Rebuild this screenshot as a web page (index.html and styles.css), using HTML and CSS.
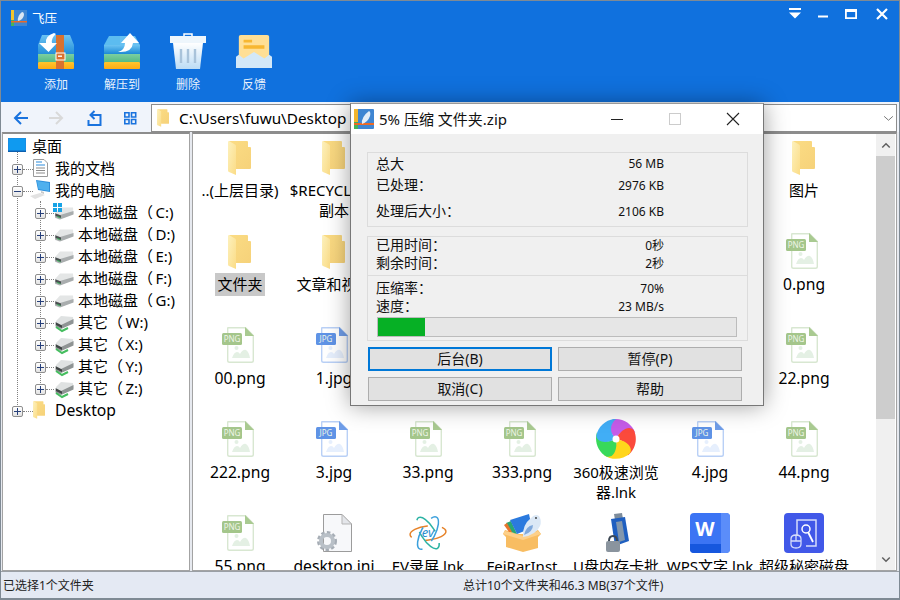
FILE: index.html
```html
<!DOCTYPE html>
<html lang="zh-CN">
<head>
<meta charset="utf-8">
<title>飞压</title>
<link rel="stylesheet" href="styles.css">
</head>
<body>
<svg class="defs" width="0" height="0" aria-hidden="true">
  <defs>
    <linearGradient id="gBlue" x1="0" y1="0" x2="0" y2="1"><stop offset="0" stop-color="#6cc3f2"/><stop offset="1" stop-color="#1c8ad6"/></linearGradient>
    <linearGradient id="gGreen" x1="0" y1="0" x2="0" y2="1"><stop offset="0" stop-color="#7ccfa0"/><stop offset="1" stop-color="#55bb85"/></linearGradient>
    <linearGradient id="gYellow" x1="0" y1="0" x2="0" y2="1"><stop offset="0" stop-color="#ffc52e"/><stop offset="1" stop-color="#fdab14"/></linearGradient>
    <linearGradient id="gBin" x1="0" y1="0" x2="0" y2="1"><stop offset="0" stop-color="#ffffff"/><stop offset="1" stop-color="#bcdcf5"/></linearGradient>
    <linearGradient id="gFlap" x1="0" y1="0" x2="1" y2="1"><stop offset="0" stop-color="#fdf1bd"/><stop offset="1" stop-color="#fbdc86"/></linearGradient>
    <linearGradient id="gBack" x1="0" y1="0" x2="1" y2="1"><stop offset="0" stop-color="#fbdc84"/><stop offset="1" stop-color="#f6d27a"/></linearGradient>
    <symbol id="folder" viewBox="0 0 23 34">
      <path d="M1 0H19Q20 0 20 1V6H22Q23 6 23 7V27Q23 28 22 28H8Z" fill="url(#gBack)"/>
      <path d="M0 1Q0 0 1 0L7 3.500Q8 4 8 5V34L1 31Q0 30.500 0 29.500Z" fill="url(#gFlap)"/>
    </symbol>
    <symbol id="png" viewBox="0 0 32 36">
      <path d="M6 .7H23.500L31.300 8.500V33.500Q31.300 35.300 29.500 35.300H7.500Q5.700 35.300 5.700 33.500V1Z" fill="#fff" stroke="#d8e7d1" stroke-width="1.400"/>
      <path d="M23 0L32 9H23Z" fill="#a9ca91"/>
      <path d="M10 31Q12 25 15 25Q17 25 18 27Q21 22 24 23Q27 25 28 31Z" fill="#e4f0e4"/>
      <circle cx="14.500" cy="21" r="2" fill="#e4f0e4"/>
      <rect x="0" y="6" width="20" height="12" rx="1.500" fill="#a4c68b"/>
      <text class="tag" x="10" y="15.200">PNG</text>
    </symbol>
    <symbol id="jpg" viewBox="0 0 32 36">
      <path d="M6 .7H23.500L31.300 8.500V33.500Q31.300 35.300 29.500 35.300H7.500Q5.700 35.300 5.700 33.500V1Z" fill="#fff" stroke="#b9d0f6" stroke-width="1.400"/>
      <path d="M23 0L32 9H23Z" fill="#6f9de8"/>
      <path d="M10 31Q12 25 15 25Q17 25 18 27Q21 22 24 23Q27 25 28 31Z" fill="#e6effd"/>
      <circle cx="14.500" cy="21" r="2" fill="#e6effd"/>
      <rect x="0" y="6" width="20" height="12" rx="1.500" fill="#5f93e6"/>
      <text class="tag" x="10" y="15.200">JPG</text>
    </symbol>
    <symbol id="drive" viewBox="0 0 20 14">
      <path d="M1 7L6 1.500H19L19.500 8L5 13.500L1 12Z" fill="#e4e6e6"/>
      <path d="M1 7L6 9L19.500 5V8.500L6 13.500L1 11.500Z" fill="#a9adae"/>
      <path d="M1.500 7.500L7 9.500V12L1.500 10Z" fill="#4a4f50"/>
      <path d="M3 10.500L6.500 11.700" stroke="#38b05a" stroke-width="1"/>
    </symbol>
    <symbol id="xdrive" viewBox="0 0 20 18">
      <path d="M2 6L7 1L19 2L19.500 7L7 13L1.500 10Z" fill="#dfe2e2"/>
      <path d="M1.500 7L7 10L19.500 4V8.500L7 14L1.500 11.500Z" fill="#8f9494"/>
      <path d="M2 7.500L8 10.500V13L2 10Z" fill="#3f4444"/>
      <path d="M2 12L8 16L14 13" stroke="#45bd5f" stroke-width="2" fill="none"/>
    </symbol>
    <symbol id="chev" viewBox="0 0 12 8">
      <path d="M1.500 6.500L6 2L10.500 6.500" fill="none" stroke="#606060" stroke-width="1.800"/>
    </symbol>
    <path id="blade" d="M20 20C12 12 11 3 17 .3C27 -1 36 5 39.300 14C31 9 24 12 20 20Z"/>
  </defs>
</svg>

<div class="app">
  <header class="head">
    <div class="titlebar">
      <svg class="app-logo" viewBox="0 0 16 16">
        <rect width="16" height="16" fill="#3f86d2"/>
        <rect width="3" height="16" fill="#f3c52c"/>
        <rect width="3" height="6" y="10" fill="#46b35a"/>
        <path d="M0 11H16V12.500H0Z" fill="#ea6a28"/>
        <path d="M7 11Q6 6 11 2Q13 2 13 5Q12 10 7 11Z" fill="#dbe7f3"/>
      </svg>
      <span class="app-name">飞压</span>
      <div class="winbtns">
        <svg class="wb" viewBox="0 0 14 14"><path d="M1 1H13V3H1ZM1 5.500H13L7 11.500Z" fill="#fff"/></svg>
        <svg class="wb" viewBox="0 0 14 14"><path d="M2 8.500H12V10.500H2Z" fill="#fff"/></svg>
        <svg class="wb" viewBox="0 0 14 14"><path d="M1 2H13V12H1ZM2.800 5V10.200H11.200V5Z" fill="#fff" fill-rule="evenodd"/></svg>
        <svg class="wb wb-x" viewBox="0 0 14 14"><path d="M2 2L12 12M12 2L2 12" stroke="#fff" stroke-width="2.200"/></svg>
      </div>
    </div>
    <div class="toolbar">
      <div class="tool">
        <svg class="tool-ico" viewBox="0 0 36 36">
          <path d="M4 2H32L36 12V23H0V12Z" fill="url(#gBlue)"/>
          <rect y="21" width="36" height="8" fill="url(#gGreen)"/>
          <rect y="29" width="36" height="7" rx="1" fill="url(#gYellow)"/>
          <rect x="18" y="2" width="8" height="34" fill="#d9722f"/>
          <rect x="18" y="20" width="9" height="7" fill="#d9722f" stroke="#fff" stroke-width="1"/>
          <rect x="20" y="22.500" width="4" height="1.400" fill="#fff"/>
          <path d="M16 0Q7 3 8 10H1L10.500 19L19 10H14Q13 5 18 1Z" fill="#fff"/>
        </svg>
        <span class="tool-label">添加</span>
      </div>
      <div class="tool">
        <svg class="tool-ico" viewBox="0 0 36 36">
          <path d="M5 3H20L17 20L0 12Z" fill="#5cbcf0"/>
          <path d="M16 3H31L36 12H16Z" fill="#67c0f1"/>
          <path d="M0 12H36V21H0Z" fill="url(#gBlue)"/>
          <rect y="21" width="36" height="8" fill="url(#gGreen)"/>
          <rect y="29" width="36" height="7" rx="1" fill="url(#gYellow)"/>
          <path d="M14 19Q21 17 21 10H17L26 0L35 10H29Q28 20 14 19Z" fill="#fff"/>
        </svg>
        <span class="tool-label">解压到</span>
      </div>
      <div class="tool">
        <svg class="tool-ico" viewBox="0 0 36 36">
          <path d="M14 3V1H22V3" fill="none" stroke="#fff" stroke-width="1.500"/>
          <rect y="3" width="36" height="7" fill="#eef6fc"/>
          <path d="M3 10H33L30 36H6Z" fill="url(#gBin)"/>
          <path d="M11 16V30M18 16V30M25 16V30" stroke="#a9c3da" stroke-width="2.400"/>
        </svg>
        <span class="tool-label">删除</span>
      </div>
      <div class="tool">
        <svg class="tool-ico" viewBox="0 0 38 36">
          <rect x="3" y="1" width="32" height="30" rx="2" fill="#ffdf95"/>
          <path d="M8 6H17V9H8ZM8 12H30V15.500H8Z" fill="#f7b731"/>
          <path d="M0 36V24L3 22L8 26L19 19L30 26L35 22L38 24V36Z" fill="#d3e8f8"/>
        </svg>
        <span class="tool-label">反馈</span>
      </div>
    </div>
  </header>

  <nav class="navbar">
    <div class="nav-btns">
      <svg class="nav-ico" viewBox="0 0 16 16"><path d="M15 8H2M8 2L2 8L8 14" fill="none" stroke="#1a73de" stroke-width="2"/></svg>
      <svg class="nav-ico" viewBox="0 0 16 16"><path d="M1 8H14M8 2L14 8L8 14" fill="none" stroke="#d9d9d9" stroke-width="2"/></svg>
      <svg class="nav-ico nav-up" viewBox="0 0 16 16"><path d="M7.500 1L3.500 5L7.500 9M3.500 5H13.500V15H1.500V10" fill="none" stroke="#1a73de" stroke-width="2"/></svg>
      <svg class="nav-ico" viewBox="0 0 16 16"><path d="M2.800 2.800H7V7H2.800ZM9.500 2.800H13.700V7H9.500ZM2.800 9.500H7V13.700H2.800ZM9.500 9.500H13.700V13.700H9.500Z" fill="none" stroke="#1a73de" stroke-width="1.600"/></svg>
    </div>
    <div class="addr">
      <svg class="addr-ico"><use href="#folder"/></svg>
      <span class="addr-text">C:\Users\fuwu\Desktop</span>
      <svg class="addr-chev" viewBox="0 0 12 8"><path d="M1 1.500L6 6L11 1.500" fill="none" stroke="#666" stroke-width="1"/></svg>
    </div>
  </nav>

  <main class="main">
    <aside class="tree">
      <i class="guide guide-a"></i>
      <i class="guide guide-b"></i>
      <div class="trow lv0">
        <svg class="ico-desk" viewBox="0 0 18 14"><rect width="18" height="14" fill="#1e8be0"/><rect y="12.500" width="18" height="1.500" fill="#0c5fae"/><rect x=".7" y=".7" width="16.600" height="11.600" fill="#0f9af0"/></svg>
        <span class="tx0">桌面</span>
      </div>
      <div class="trow lv1">
        <b class="exp plus"></b><i class="dots"></i>
        <span class="slot1"><svg class="ico-doc" viewBox="0 0 15 18"><path d="M.5.500H11L14.500 4V17.500H.5Z" fill="#fff" stroke="#9a9a9a"/><path d="M3 3H9M3 6H12" stroke="#2d8bdc" stroke-width="1.200"/><path d="M3 9H12M3 11.500H12M3 14H12" stroke="#8a8a8a"/></svg></span>
        <span class="tx">我的文档</span>
      </div>
      <div class="trow lv1">
        <b class="exp minus"></b><i class="dots"></i>
        <span class="slot1"><svg class="ico-pc" viewBox="0 0 20 20"><path d="M6 0L20 2V12L8 10Z" fill="#2e8fdb"/><path d="M7 1L19 3V11L8.500 9Z" fill="#4fb0ee"/><path d="M11 11L14 12V14L11 13Z" fill="#c9c9c9"/><path d="M0 16L10 13L15 15L5 19Z" fill="#e2e2e2"/></svg></span>
        <span class="tx">我的电脑</span>
      </div>
      <div class="trow lv2">
        <b class="exp plus"></b><i class="dots short"></i>
        <span class="slot2">
          <svg class="ico-drive"><use href="#drive"/></svg>
          <svg class="ico-win" viewBox="0 0 9 9"><path d="M0 0H4V4H0ZM5 0H9V4H5ZM0 5H4V9H0ZM5 5H9V9H5Z" fill="#17a3e6"/></svg>
        </span>
        <span class="tx">本地磁盘（&#8201;C:)</span>
      </div>
      <div class="trow lv2"><b class="exp plus"></b><i class="dots short"></i><span class="slot2"><svg class="ico-drive"><use href="#drive"/></svg></span><span class="tx">本地磁盘（&#8201;D:)</span></div>
      <div class="trow lv2"><b class="exp plus"></b><i class="dots short"></i><span class="slot2"><svg class="ico-drive"><use href="#drive"/></svg></span><span class="tx">本地磁盘（&#8201;E:)</span></div>
      <div class="trow lv2"><b class="exp plus"></b><i class="dots short"></i><span class="slot2"><svg class="ico-drive"><use href="#drive"/></svg></span><span class="tx">本地磁盘（&#8201;F:)</span></div>
      <div class="trow lv2"><b class="exp plus"></b><i class="dots short"></i><span class="slot2"><svg class="ico-drive"><use href="#drive"/></svg></span><span class="tx">本地磁盘（&#8201;G:)</span></div>
      <div class="trow lv2"><b class="exp plus"></b><i class="dots short"></i><span class="slot2"><svg class="ico-xdrive"><use href="#xdrive"/></svg></span><span class="tx">其它（&#8201;W:)</span></div>
      <div class="trow lv2"><b class="exp plus"></b><i class="dots short"></i><span class="slot2"><svg class="ico-xdrive"><use href="#xdrive"/></svg></span><span class="tx">其它（&#8201;X:)</span></div>
      <div class="trow lv2"><b class="exp plus"></b><i class="dots short"></i><span class="slot2"><svg class="ico-xdrive"><use href="#xdrive"/></svg></span><span class="tx">其它（&#8201;Y:)</span></div>
      <div class="trow lv2"><b class="exp plus"></b><i class="dots short"></i><span class="slot2"><svg class="ico-xdrive"><use href="#xdrive"/></svg></span><span class="tx">其它（&#8201;Z:)</span></div>
      <div class="trow lv1">
        <b class="exp plus"></b><i class="dots"></i>
        <span class="slot1"><svg class="ico-tfolder"><use href="#folder"/></svg></span>
        <span class="en">Desktop</span>
      </div>
    </aside>

    <section class="files">
      <div class="grid">
        <div class="cell"><div class="ic"><svg class="i-folder"><use href="#folder"/></svg></div><div class="lb">..(上层目录)</div></div>
        <div class="cell"><div class="ic"><svg class="i-folder"><use href="#folder"/></svg></div><div class="lb">$RECYCLE.BI<br>副本</div></div>
        <div class="cell"></div><div class="cell"></div><div class="cell"></div><div class="cell"></div>
        <div class="cell"><div class="ic"><svg class="i-folder"><use href="#folder"/></svg></div><div class="lb">图片</div></div>

        <div class="cell"><div class="ic"><svg class="i-folder"><use href="#folder"/></svg></div><div class="lb"><span class="sel">文件夹</span></div></div>
        <div class="cell"><div class="ic"><svg class="i-folder"><use href="#folder"/></svg></div><div class="lb">文章和视频</div></div>
        <div class="cell"></div><div class="cell"></div><div class="cell"></div><div class="cell"></div>
        <div class="cell"><div class="ic"><svg class="i-file"><use href="#png"/></svg></div><div class="lb en">0.png</div></div>

        <div class="cell"><div class="ic"><svg class="i-file"><use href="#png"/></svg></div><div class="lb en">00.png</div></div>
        <div class="cell"><div class="ic"><svg class="i-file"><use href="#jpg"/></svg></div><div class="lb en">1.jpg</div></div>
        <div class="cell"></div><div class="cell"></div><div class="cell"></div><div class="cell"></div>
        <div class="cell"><div class="ic"><svg class="i-file"><use href="#png"/></svg></div><div class="lb en">22.png</div></div>

        <div class="cell"><div class="ic"><svg class="i-file"><use href="#png"/></svg></div><div class="lb en">222.png</div></div>
        <div class="cell"><div class="ic"><svg class="i-file"><use href="#jpg"/></svg></div><div class="lb en">3.jpg</div></div>
        <div class="cell"><div class="ic"><svg class="i-file"><use href="#png"/></svg></div><div class="lb en">33.png</div></div>
        <div class="cell"><div class="ic"><svg class="i-file"><use href="#png"/></svg></div><div class="lb en">333.png</div></div>
        <div class="cell"><div class="ic">
          <svg class="i-big" viewBox="0 0 40 40">
            <use href="#blade" fill="#c55ce9"/>
            <use href="#blade" fill="#fb4a3c" transform="rotate(72 20 20)"/>
            <use href="#blade" fill="#ffd61c" transform="rotate(144 20 20)"/>
            <use href="#blade" fill="#38d95a" transform="rotate(216 20 20)"/>
            <use href="#blade" fill="#41aef6" transform="rotate(288 20 20)"/>
            <circle cx="20" cy="20" r="3.500" fill="#fff"/>
          </svg>
        </div><div class="lb">360极速浏览器.lnk</div></div>
        <div class="cell"><div class="ic"><svg class="i-file"><use href="#jpg"/></svg></div><div class="lb en">4.jpg</div></div>
        <div class="cell"><div class="ic"><svg class="i-file"><use href="#png"/></svg></div><div class="lb en">44.png</div></div>

        <div class="cell"><div class="ic"><svg class="i-file"><use href="#png"/></svg></div><div class="lb en">55.png</div></div>
        <div class="cell"><div class="ic">
          <svg class="i-big" viewBox="0 0 40 40">
            <path d="M9.500 1.500H28L37.500 11V38.500H9.500Z" fill="#f7f8fa" stroke="#9c9c9c"/>
            <path d="M28 1.500V11H37.500Z" fill="#e4e6ea" stroke="#b5b5b5"/>
            <circle cx="13" cy="28" r="7.500" fill="none" stroke="#a6adb5" stroke-width="5" stroke-dasharray="3 2"/>
            <circle cx="13" cy="28" r="6" fill="none" stroke="#b9c0c7" stroke-width="4"/>
          </svg>
        </div><div class="lb en">desktop.ini</div></div>
        <div class="cell"><div class="ic">
          <svg class="i-big" viewBox="0 0 40 40" fill="none" stroke-width="1.500">
            <ellipse cx="20" cy="20" rx="18" ry="7" stroke="#e6832a" transform="rotate(-6 20 20)" stroke-dasharray="24 14"/>
            <ellipse cx="20" cy="20" rx="18" ry="7" stroke="#2cb3a4" transform="rotate(58 20 20)" stroke-dasharray="26 12"/>
            <ellipse cx="20" cy="20" rx="18" ry="7" stroke="#3ba0dc" transform="rotate(-62 20 20)" stroke-dasharray="26 12"/>
            <text class="ev-txt" x="20" y="24">ev</text>
          </svg>
        </div><div class="lb">EV录屏.lnk</div></div>
        <div class="cell"><div class="ic">
          <svg class="i-big" viewBox="0 0 40 40">
            <path d="M1 21L3 17L16 21H22L36 17L39 21L36 24V35L21 39L4 34V24Z" fill="#f8bd62"/>
            <path d="M1 21L21 27L39 21L36 18L21 23L3 18Z" fill="#fdd08a"/>
            <path d="M4 10L9 8L15 21L9 19Z" fill="#2aa772"/>
            <path d="M2 12L5 10L10 19L7 19Z" fill="#e8752c"/>
            <path d="M8 7L27 1L30 15L15 21Z" fill="#2b7ade"/>
            <path d="M21 24Q20 12 29 5Q33 0 37 3Q40 8 38 13Q34 22 21 24Z" fill="#dbe8f6"/>
            <path d="M22 22Q24 13 31 12Q31 19 22 22Z" fill="#7fa8dc"/>
            <circle cx="34" cy="5" r=".9" fill="#333"/>
          </svg>
        </div><div class="lb">FeiRarInst</div></div>
        <div class="cell"><div class="ic">
          <svg class="i-big" viewBox="0 0 40 40">
            <path d="M18 1L26 0L27 6L19 7Z" fill="#7d8c9c"/>
            <path d="M15 6L29 4L33 28L19 33Z" fill="#1f5fc0"/>
            <path d="M20 9L26 8L29 27L23 29Z" fill="#8297ad"/>
            <rect x="10" y="28" width="14" height="11" rx="2" fill="#8a949e"/>
            <path d="M13 28Q13 23 17 23Q21 23 21 28" fill="none" stroke="#3d4854" stroke-width="2"/>
          </svg>
        </div><div class="lb">U盘内存卡批量</div></div>
        <div class="cell"><div class="ic">
          <svg class="i-big" viewBox="0 0 40 40">
            <rect width="40" height="40" rx="4" fill="#3b74f4"/>
            <path d="M31 0H36Q40 0 40 4V36Q40 40 36 40H31Z" fill="#5b8dfa"/>
            <path d="M0 31H31V40H4Q0 40 0 36Z" fill="#1657de"/>
            <text class="w-txt" x="15" y="23">W</text>
          </svg>
        </div><div class="lb">WPS文字.lnk</div></div>
        <div class="cell"><div class="ic">
          <svg class="i-big" viewBox="0 0 40 40">
            <rect width="40" height="40" rx="4" fill="#4158e8"/>
            <path d="M13 22V7H32V33H22" fill="none" stroke="#d5dcfb" stroke-width="1.500"/>
            <circle cx="22" cy="16" r="4" fill="none" stroke="#fff" stroke-width="1.500"/>
            <path d="M24 19L29 29" stroke="#fff" stroke-width="1.800"/>
            <path d="M7 26Q7 22 12 22Q17 22 17 26V31Q17 35 12 35Q7 35 7 31ZM7 28H17M12 22V28" fill="none" stroke="#d5dcfb" stroke-width="1.300"/>
          </svg>
        </div><div class="lb">超级秘密磁盘</div></div>
      </div>
      <div class="scroll">
        <div class="sb-btn"><svg class="sb-chev"><use href="#chev"/></svg></div>
        <div class="sb-thumb"></div>
        <div class="sb-track"></div>
        <div class="sb-btn"><svg class="sb-chev flip"><use href="#chev"/></svg></div>
      </div>
    </section>
  </main>

  <footer class="status">
    <span class="st-left">已选择1个文件夹</span>
    <span class="st-mid">总计10个文件夹和46.3 MB(37个文件)</span>
  </footer>
</div>

<div class="dlg">
  <div class="dlg-title">
    <svg class="dlg-logo" viewBox="0 0 20 20">
      <rect width="20" height="20" rx="1" fill="#3f86d2"/>
      <rect width="4" height="13" fill="#f3b52c"/>
      <rect width="4" height="7" y="13" fill="#46b35a"/>
      <path d="M0 14H20V16H0Z" fill="#ea6a28"/>
      <path d="M8 15Q7 8 15 2Q17 3 16 7Q14 13 8 15Z" fill="#e4eef8"/>
    </svg>
    <span class="dlg-name">5% 压缩 文件夹.zip</span>
    <div class="dlg-ctrls">
      <svg class="dc" viewBox="0 0 14 14"><path d="M1 7.500H13" stroke="#222" stroke-width="1"/></svg>
      <svg class="dc" viewBox="0 0 14 14"><rect x="1.500" y="1.500" width="11" height="11" fill="none" stroke="#ccc"/></svg>
      <svg class="dc" viewBox="0 0 14 14"><path d="M1 1L13 13M13 1L1 13" stroke="#222" stroke-width="1.100"/></svg>
    </div>
  </div>
  <div class="dlg-body">
    <div class="group g1">
      <div class="kv kv1"><span class="k">总大</span><span class="v">56 MB</span></div>
      <div class="kv kv2"><span class="k">已处理：</span><span class="v">2976 KB</span></div>
      <div class="kv kv3"><span class="k">处理后大小：</span><span class="v">2106 KB</span></div>
    </div>
    <div class="group g2">
      <div class="sub sub-a">
        <div class="kv kv-t"><span class="k">已用时间：</span><span class="v">0秒</span></div>
        <div class="kv kv-t"><span class="k">剩余时间：</span><span class="v">2秒</span></div>
      </div>
      <div class="sub sub-b">
        <div class="kv kv-t"><span class="k">压缩率：</span><span class="v">70%</span></div>
        <div class="kv kv-t"><span class="k">速度：</span><span class="v">23 MB/s</span></div>
        <div class="bar"><div class="fill" style="width:13%"></div></div>
      </div>
    </div>
    <div class="btns">
      <div class="btn focus">后台(B)</div>
      <div class="btn">暂停(P)</div>
      <div class="btn">取消(C)</div>
      <div class="btn">帮助</div>
    </div>
  </div>
</div>
</body>
</html>
```

FILE: styles.css
```css
* { box-sizing: border-box; }
html, body { margin: 0; padding: 0; width: 900px; height: 600px; overflow: hidden; }
body { font-family: "Noto Sans", "Noto Sans CJK SC", sans-serif; font-size: 15px; color: #000; background: #fff; position: relative; }
.defs { position: absolute; }
.tag { font-family: "Noto Sans", sans-serif; font-size: 8px; fill: #eef5e8; text-anchor: middle; }
.w-txt { font-family: "Noto Sans", sans-serif; font-size: 20px; font-weight: 700; fill: #fff; text-anchor: middle; }
.ev-txt { font-family: "Noto Sans", sans-serif; font-size: 13px; font-style: italic; fill: #2a8fcf; stroke: none; text-anchor: middle; }
.en { font-size: 15.700px; }

.app { width: 900px; height: 600px; display: flex; flex-direction: column; border: 1px solid #7f8a94; border-bottom-width: 2px; background: #f0f4fb; }

.head { height: 101px; background: #1071de; color: #fff; display: flex; flex-direction: column; flex: none; }
.titlebar { height: 32px; display: flex; align-items: center; padding: 0 10px 4px 10px; }
.app-logo { width: 16px; height: 16px; margin-top: 5px; }
.app-name { font-size: 12.500px; margin: 5px 0 0 5px; }
.winbtns { margin-left: auto; display: flex; gap: 14px; align-self: flex-start; margin-top: 6px; }
.wb { width: 14px; height: 14px; display: block; }
.wb-x { margin-left: 3px; }
.toolbar { display: flex; padding-left: 22px; }
.tool { width: 66px; display: flex; flex-direction: column; align-items: center; }
.tool-ico { width: 36px; height: 36px; }
.tool-label { font-size: 12px; line-height: 18px; margin-top: 7px; color: #e8f1fc; }

.navbar { height: 30px; flex: none; display: flex; align-items: stretch; background: #f0f4fb; padding: 2px 2px 0 0; }
.nav-btns { width: 150px; display: flex; align-items: center; padding-left: 12px; gap: 19px; }
.nav-ico { width: 16px; height: 16px; }
.nav-up { margin-left: 4px; }
.addr { flex: 1; background: #fff; border: 1px solid #8d8d8d; border-width: 1px 1px 1px 1.500px; display: flex; align-items: center; padding-left: 5px; }
.addr-ico { width: 12px; height: 18px; }
.addr-text { margin-left: 10px; font-size: 15.300px; }
.addr-chev { width: 11px; height: 7px; margin-left: auto; margin-right: 2px; }

.main { flex: 1; min-height: 0; display: flex; gap: 2px; padding: 0 2px 0 1px; background: #e6e9ef; }
.tree { width: 188px; flex: none; position: relative; background: #fff; border: 1px solid #a3a3a3; border-top: 2px solid #8d8d8d; padding-top: 0; overflow: hidden; }
.trow { height: 22px; display: flex; align-items: center; white-space: nowrap; position: relative; }
.tx { padding-bottom: 2px; }
.lv0 { padding-left: 5px; margin-bottom: 1px; }
.lv1 { padding-left: 9px; }
.lv2 { padding-left: 32px; }
.ico-desk { width: 18px; height: 14px; margin-right: 6px; }
.exp { width: 11px; height: 11px; margin-top: 2px; border: 1px solid #8e8e8e; border-radius: 2px; background: linear-gradient(#fff, #e3e3e3); position: relative; flex: none; }
.exp::before { content: ""; position: absolute; left: 1px; right: 1px; top: 4px; height: 1px; background: #27407a; }
.plus::after { content: ""; position: absolute; top: 1px; bottom: 1px; left: 4px; width: 1px; background: #27407a; }
.dots { width: 10px; height: 0; margin-top: 2px; border-top: 1px dotted #808080; flex: none; }
.dots.short { width: 8px; }
.slot1 { width: 22px; flex: none; display: flex; align-items: center; }
.slot2 { width: 24px; flex: none; display: flex; align-items: center; position: relative; height: 22px; }
.ico-doc { width: 15px; height: 18px; }
.ico-pc { width: 20px; height: 20px; margin-left: -3px; }
.ico-tfolder { width: 12px; height: 18px; }
.ico-drive { width: 20px; height: 14px; margin-top: 2px; }
.ico-xdrive { width: 20px; height: 18px; margin-top: 3px; }
.ico-win { position: absolute; left: -1px; top: 2px; width: 9px; height: 9px; }
.guide { position: absolute; width: 0; border-left: 1px dotted #808080; }
.guide-a { left: 14px; top: 17px; height: 262px; }
.guide-b { left: 37px; top: 67px; height: 188px; }

.files { flex: 1; min-width: 0; display: flex; background: #fff; border: 1px solid #a3a3a3; border-top: 2px solid #8d8d8d; overflow: hidden; }
.grid { flex: 1; display: grid; grid-template-columns: repeat(7, 94px); grid-auto-rows: 94px; overflow: hidden; }
.cell { display: flex; flex-direction: column; align-items: center; padding-top: 6px; }
.ic { height: 36px; display: flex; align-items: center; justify-content: center; flex: none; }
.ic svg { flex: none; }
.i-folder { width: 23px; height: 34px; margin-right: 2px; }
.i-file { width: 32px; height: 36px; margin: -2px 4px 0 0; }
.i-big { width: 40px; height: 40px; margin-top: -2px; }
.lb { width: 92px; text-align: center; line-height: 20px; margin-top: 4px; font-size: 15px; }
.lb.en { font-size: 15.700px; }
.sel { display: inline-block; background: #c8c8c8; padding: 2px; margin: -2px; line-height: 19px; }

.scroll { width: 19px; flex: none; display: flex; flex-direction: column; background: #f0f0f0; margin-right: 1px; }
.sb-btn { height: 22px; display: flex; align-items: center; justify-content: center; flex: none; }
.sb-chev { width: 10px; height: 7px; }
.flip { transform: scaleY(-1); }
.sb-thumb { height: 263px; background: #cdcdcd; flex: none; }
.sb-track { flex: 1; }

.status { height: 27px; flex: none; display: flex; align-items: center; background: #e4e9f3; border-top: 1px solid #9a9fa5; font-size: 12px; color: #222; padding-left: 2px; position: relative; }
.st-left { width: 460px; }

.dlg { position: absolute; left: 350px; top: 103px; width: 414px; height: 303px; background: #f0f0f0; border: 1px solid #777; border-top-color: #999; box-shadow: 0 0 22px rgba(0,0,0,.38); display: flex; flex-direction: column; }
.dlg-title { height: 30px; background: #fff; display: flex; align-items: center; padding-left: 3px; flex: none; }
.dlg-logo { width: 20px; height: 20px; }
.dlg-name { margin-left: 5px; font-size: 15px; color: #111; padding-bottom: 2px; }
.dlg-ctrls { margin-left: auto; display: flex; gap: 44px; padding-right: 23px; }
.dc { width: 14px; height: 14px; }
.dlg-body { flex: 1; padding: 18px 16px 0 16px; display: flex; flex-direction: column; }
.group { border: 1px solid #dcdcdc; width: 381px; flex: none; }
.g1 { height: 75px; padding: 0 83px 0 8px; }
.g2 { height: 105px; margin-top: 9px; }
.kv { display: flex; justify-content: space-between; align-items: center; font-size: 14px; color: #111; }
.k { padding-bottom: 2px; }
.v { font-size: 12px; color: #111; }
.kv1 { height: 21px; }
.kv2 { height: 22px; }
.kv3 { height: 30px; }
.sub { padding: 0 83px 0 8px; }
.kv-t { height: 18px; }
.sub-a { height: 39px; }
.sub-a .kv-t:first-child { margin-top: -1px; }
.sub-b { border-top: 1px solid #dcdcdc; padding-top: 3px; }
.bar { width: 360px; height: 20px; margin: 2px 0 0 1px; background: #e6e6e6; border: 1px solid #bcbcbc; }
.fill { height: 100%; background: #06b025; }
.btns { display: grid; grid-template-columns: 184px 184px; grid-auto-rows: 24px; column-gap: 6px; row-gap: 6px; margin: 6px 0 0 1px; }
.btn { background: #e1e1e1; border: 1px solid #adadad; display: flex; align-items: center; justify-content: center; font-size: 14px; color: #111; padding-bottom: 3px; }
.btn.focus { border: 2px solid #0078d7; }
```
